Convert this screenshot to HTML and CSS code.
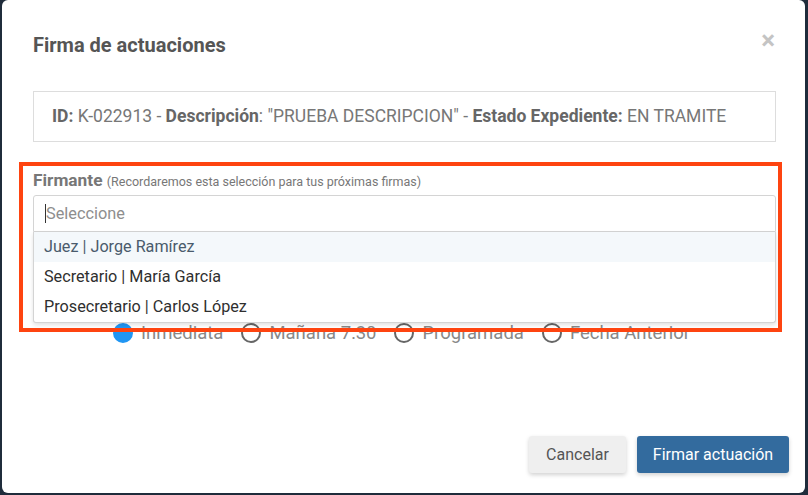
FILE: index.html
```html
<!DOCTYPE html>
<html lang="es">
<head>
<meta charset="utf-8">
<title>Firma de actuaciones</title>
<link rel="stylesheet" href="styles.css">
</head>
<body>
<div class="modal">
  <div class="modal-header">
    <h2 class="modal-title">Firma de actuaciones</h2>
    <span class="close">×</span>
  </div>
  <div class="modal-body">
    <div class="info"><b>ID:</b> K-022913 - <b>Descripción</b>: "PRUEBA DESCRIPCION" - <b>Estado Expediente:</b> EN TRAMITE</div>
    <div class="field">
      <div class="label"><b>Firmante</b> <small>(Recordaremos esta selección para tus próximas firmas)</small></div>
      <div class="select">
        <div class="input"><span class="caret"></span><span class="placeholder">Seleccione</span></div>
        <ul class="menu">
          <li class="active">Juez | Jorge Ramírez</li>
          <li>Secretario | María García</li>
          <li>Prosecretario | Carlos López</li>
        </ul>
      </div>
      <div class="radios">
        <label class="radio"><span class="dot checked"></span>Inmediata</label>
        <label class="radio"><span class="dot"></span>Mañana 7:30</label>
        <label class="radio"><span class="dot"></span>Programada</label>
        <label class="radio"><span class="dot"></span>Fecha Anterior</label>
      </div>
      <div class="highlight"></div>
    </div>
  </div>
  <div class="modal-footer">
    <button class="btn btn-default">Cancelar</button>
    <button class="btn btn-primary">Firmar actuación</button>
  </div>
</div>
</body>
</html>
```
FILE: styles.css
```css
* { box-sizing: border-box; }
html, body { margin: 0; padding: 0; }
body {
  background: #1f2c3b;
  font-family: Roboto, "Liberation Sans", sans-serif;
  width: 808px;
  height: 495px;
  overflow: hidden;
}
.modal {
  margin: 0 3px 0 2px;
  height: 493px;
  background: #fff;
  border-radius: 6px;
  display: flex;
  flex-direction: column;
}
.modal-header {
  display: flex;
  justify-content: space-between;
  align-items: flex-start;
  padding: 33px 30px 0 31px;
}
.modal-title {
  margin: 0;
  font-size: 20px;
  line-height: 24px;
  font-weight: 700;
  color: #555;
}
.close {
  font-size: 26px;
  line-height: 22px;
  font-weight: 700;
  color: #c4c4c4;
  margin-top: -4px;
}
.modal-body {
  padding: 34px 29px 0 31px;
  flex: 1;
}
.info {
  border: 1px solid #ddd;
  height: 51px;
  padding: 0 18px;
  line-height: 49px;
  font-size: 17.5px;
  color: #777;
  white-space: nowrap;
}
.info b { color: #666; }
.field {
  position: relative;
  margin-top: 28px;
}
.label {
  font-size: 17.3px;
  color: #777;
  line-height: 20px;
}
.label b { color: #777; }
.label small { font-size: 12.5px; color: #777; font-weight: 400; }
.select {
  position: relative;
  margin-top: 3px;
}
.input {
  height: 37px;
  border: 1px solid #d4d4d4;
  border-radius: 3px 3px 0 0;
  display: flex;
  align-items: center;
  padding-left: 11px;
  font-size: 16.3px;
  color: #999;
  background: #fff;
}
.caret {
  width: 1px;
  height: 19px;
  background: #333;
}
.placeholder { color: #8e8e8e; }
.menu {
  position: absolute;
  left: 0;
  right: 0;
  top: 37px;
  margin: 0;
  padding: 0;
  list-style: none;
  background: #fff;
  border: 1px solid #d4d4d4;
  border-top: 0;
  border-radius: 0 0 3px 3px;
  box-shadow: 0 2px 4px rgba(0, 0, 0, 0.12);
  z-index: 2;
}
.menu li {
  height: 30px;
  line-height: 30px;
  padding-left: 10px;
  font-size: 16.2px;
  color: #2f2f2f;
}
.menu li.active {
  background: #f4f8fb;
  color: #4a5b6c;
}
.radios {
  margin-top: 91px;
  display: flex;
  justify-content: center;
  gap: 18px;
  padding-right: 6px;
  height: 20px;
  align-items: center;
}
.radio {
  display: flex;
  align-items: center;
  font-size: 18.5px;
  color: #888;
}
.dot {
  width: 20px;
  height: 20px;
  border-radius: 50%;
  border: 2px solid #666;
  margin-right: 8px;
  background: #fff;
}
.dot.checked {
  background: #2196f3;
  border-color: #2196f3;
}
.highlight {
  position: absolute;
  left: -14px;
  right: -6px;
  top: -8px;
  height: 170px;
  border: 4px solid #fe4410;
  z-index: 3;
  pointer-events: none;
}
.modal-footer {
  display: flex;
  justify-content: flex-end;
  gap: 11px;
  padding: 0 16px 20px 0;
}
.btn {
  height: 37px;
  border: 0;
  border-radius: 3px;
  font-family: Roboto, "Liberation Sans", sans-serif;
  font-size: 16px;
  padding: 0 15px;
  box-shadow: 0 2px 4px rgba(0, 0, 0, 0.18);
}
.btn-default {
  background: #efefef;
  color: #555;
  width: 97px;
}
.btn-primary {
  background: #336b9e;
  color: #fff;
  width: 152px;
}
```
